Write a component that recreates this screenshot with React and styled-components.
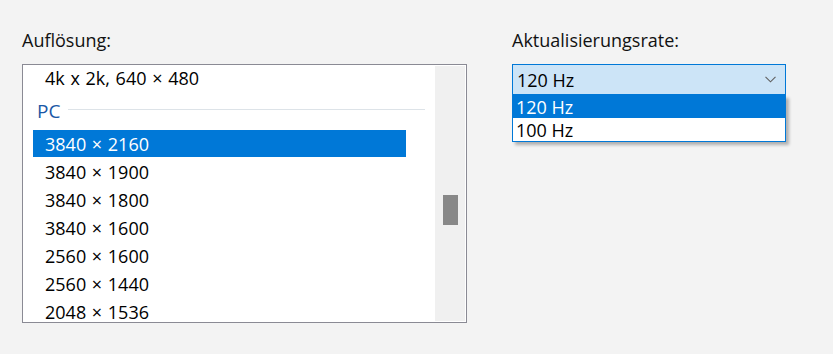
import React from "react";
import styled, { createGlobalStyle } from "styled-components";

const GlobalStyle = createGlobalStyle`
  body {
    margin: 0;
    background: #f3f3f3;
    font-family: "Open Sans", "Noto Sans", sans-serif;
    color: #000;
  }
`;

const resolutions = [
  "3840 × 2160",
  "3840 × 1900",
  "3840 × 1800",
  "3840 × 1600",
  "2560 × 1600",
  "2560 × 1440",
  "2048 × 1536",
];

const rates = ["120 Hz", "100 Hz"];

const Page = styled.div`
  display: flex;
  gap: 45px;
  padding: 28px 0 0 22px;
  height: 354px;
  box-sizing: border-box;
`;

const Column = styled.div`
  display: flex;
  flex-direction: column;
  width: ${(p) => p.width}px;
`;

const Label = styled.div`
  font-size: 18px;
  line-height: 24px;
  margin-bottom: 12px;
  color: #111;
`;

const ListBox = styled.div`
  display: flex;
  height: 259px;
  box-sizing: border-box;
  border: 1px solid #8a8a94;
  background: #fff;
  padding: 1px;
  overflow: hidden;
`;

const Items = styled.div`
  flex: 1;
  display: flex;
  flex-direction: column;
  padding: 0 10px 0 9px;
  margin-top: -2px;
  overflow: hidden;
`;

const Row = styled.div`
  display: flex;
  align-items: center;
  flex-shrink: 0;
  height: 28px;
  width: 373px;
  padding-left: 12px;
  box-sizing: border-box;
  font-size: 18px;
  word-spacing: 1px;
  color: ${(p) => (p.selected ? "#fff" : "#000")};
  background: ${(p) => (p.selected ? "#0078d7" : "transparent")};
  ${(p) => p.selected && "border-bottom: 1px solid #fff;"}
`;

const GroupHeader = styled.div`
  display: flex;
  align-items: center;
  gap: 8px;
  flex-shrink: 0;
  height: 38px;
  padding-left: 4px;
  font-size: 19px;
  color: #1a58a6;
`;

const GroupLine = styled.div`
  flex: 1;
  height: 1px;
  margin-top: -4px;
  background: #dde3e8;
`;

const ScrollBar = styled.div`
  width: 30px;
  background: #f0f0f0;
  display: flex;
  justify-content: center;
  padding-top: 129px;
  box-sizing: border-box;
`;

const Thumb = styled.div`
  width: 15px;
  height: 30px;
  background: #888;
`;

const Combo = styled.div`
  display: flex;
  align-items: center;
  justify-content: space-between;
  height: 31px;
  box-sizing: border-box;
  border: 1px solid #0078d7;
  background: #cce4f7;
  padding: 0 9px 0 4px;
  font-size: 18px;
`;

const DropList = styled.div`
  display: flex;
  flex-direction: column;
  border: 1px solid #0078d7;
  border-top: none;
  background: #fff;
  box-shadow: 3px 3px 3px rgba(0, 0, 0, 0.28);
`;

const Option = styled.div`
  height: 23px;
  display: flex;
  align-items: center;
  padding-left: 3px;
  font-size: 18px;
  background: ${(p) => (p.selected ? "#0078d7" : "#fff")};
  color: ${(p) => (p.selected ? "#fff" : "#000")};
`;

const Chevron = () => (
  <svg width="11" height="7" viewBox="0 0 11 7">
    <path d="M0.5 0.8 L5.5 5.8 L10.5 0.8" fill="none" stroke="#606060" strokeWidth="1.1" />
  </svg>
);

export default function App() {
  return (
    <>
      <GlobalStyle />
      <Page>
        <Column width={445}>
          <Label>Auflösung:</Label>
          <ListBox>
            <Items>
              <Row>4k x 2k, 640 × 480</Row>
              <GroupHeader>
                PC
                <GroupLine />
              </GroupHeader>
              {resolutions.map((r, i) => (
                <Row key={r} selected={i === 0}>
                  {r}
                </Row>
              ))}
            </Items>
            <ScrollBar>
              <Thumb />
            </ScrollBar>
          </ListBox>
        </Column>
        <Column width={274}>
          <Label>Aktualisierungsrate:</Label>
          <Combo>
            120 Hz
            <Chevron />
          </Combo>
          <DropList>
            {rates.map((r, i) => (
              <Option key={r} selected={i === 0}>
                {r}
              </Option>
            ))}
          </DropList>
        </Column>
      </Page>
    </>
  );
}
